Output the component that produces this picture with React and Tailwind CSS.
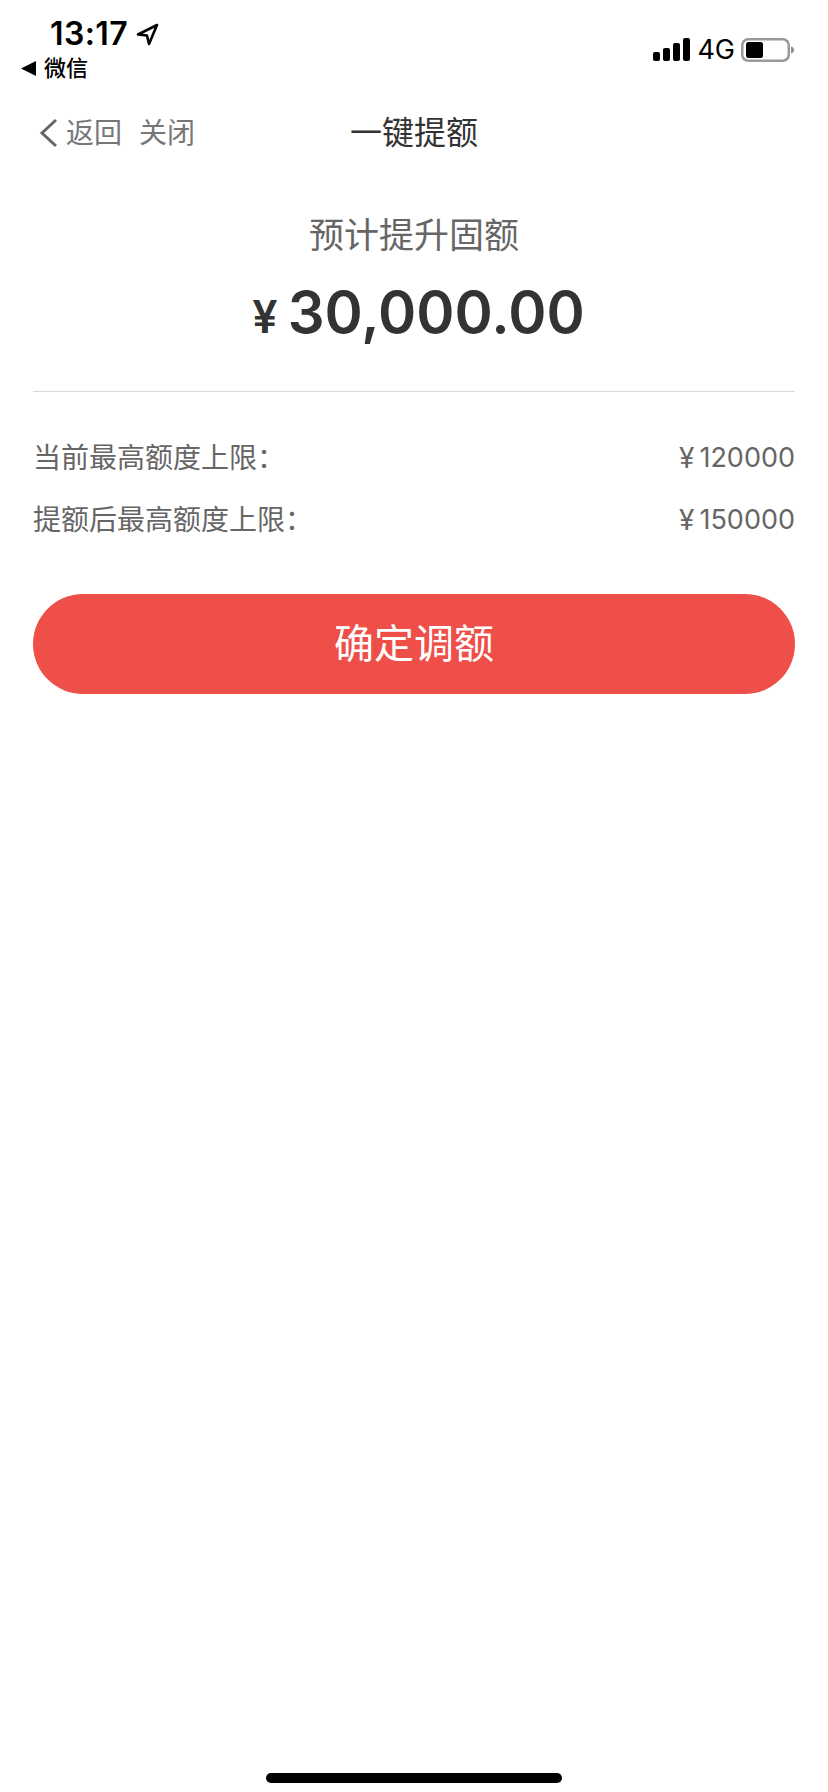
import React from 'react';

const font = "font-['Inter','Noto_Sans_CJK_SC',sans-serif]";

function StatusBar() {
    return (
        <div className="flex justify-between h-[101px]">
            <div className="pt-[17px]">
                <div className="flex items-center pl-[50px] h-[34px]">
                    <span className="text-[32px] leading-[34px] font-semibold text-black tracking-[0.4px]">13:17</span>
                    <svg className="ml-[8px]" width="23" height="23" viewBox="0 0 23 23">
                        <path d="M21 2 2 11.500l9 1 2 8.500z" fill="none" stroke="#000" strokeWidth="2.6" strokeLinejoin="round" />
                    </svg>
                </div>
                <div className="flex items-center pl-[21px] h-[24px] mt-[5px]">
                    <svg width="15" height="15" viewBox="0 0 15 15">
                        <path d="M15 0v15L0 7.500z" fill="#000" />
                    </svg>
                    <span className="ml-[8px] text-[22px] leading-[24px] font-medium text-black">微信</span>
                </div>
            </div>
            <div className="flex items-start pt-[38px] pr-[34px]">
                <svg width="37" height="23" viewBox="0 0 37 23">
                    <rect x="0" y="14" width="7" height="9" rx="2" fill="#000" />
                    <rect x="10" y="10" width="7" height="13" rx="2" fill="#000" />
                    <rect x="20" y="5" width="7" height="18" rx="2" fill="#000" />
                    <rect x="30" y="0" width="7" height="23" rx="2" fill="#000" />
                </svg>
                <span className="ml-[7px] text-[27px] leading-[23px] text-black">4G</span>
                <svg className="ml-[6px]" width="53" height="24" viewBox="0 0 53 24">
                    <rect x="1.250" y="1.250" width="46.500" height="21.500" rx="6" fill="none" stroke="#999" strokeWidth="2.500" />
                    <rect x="5" y="4" width="17" height="16" rx="2.500" fill="#000" />
                    <path d="M50 8.500c2 .6 3 1.800 3 3.500s-1 2.900-3 3.500z" fill="#8e8e8e" />
                </svg>
            </div>
        </div>
    );
}

function NavBar() {
    return (
        <div className="relative flex items-center h-[64px] pl-[39px]">
            <svg width="19" height="30" viewBox="0 0 19 30">
                <path d="M17 2 3 15l14 13" fill="none" stroke="#666" strokeWidth="3" />
            </svg>
            <span className="ml-[8px] text-[28px] leading-[36px] text-[#777]">返回</span>
            <span className="ml-[17px] text-[28px] leading-[36px] text-[#777]">关闭</span>
            <div className="absolute inset-0 flex items-center justify-center pointer-events-none">
                <span className="text-[32px] leading-[40px] text-[#333]">一键提额</span>
            </div>
        </div>
    );
}

function InfoRow({ label, value }) {
    return (
        <div className="flex justify-between items-center h-[62px] text-[28px] text-[#666]">
            <span>{label}</span>
            <span className="flex items-center">
                <span className="mr-[5px]">¥</span>
                <span className="text-[27px]">{value}</span>
            </span>
        </div>
    );
}

export default function App() {
    return (
        <div className={`${font} bg-white min-h-[1792px] relative`}>
            <StatusBar />
            <NavBar />
            <div className="flex flex-col items-center pt-[47px]">
                <div className="text-[35px] leading-[46px] text-[#666]">预计提升固额</div>
                <div className="flex items-baseline mt-[16px] pl-[9px] text-[#333] font-semibold">
                    <span className="text-[45px] leading-[76px] mr-[10px]">¥</span>
                    <span className="text-[58px] leading-[76px]">30,000.00</span>
                </div>
            </div>
            <div className="mx-[33px] mt-[36px] border-t border-[#d9d9d9]" />
            <div className="mx-[33px] mt-[35px]">
                <InfoRow label="当前最高额度上限：" value="120000" />
                <InfoRow label="提额后最高额度上限：" value="150000" />
            </div>
            <div className="mx-[33px] mt-[43px]">
                <button className="w-full h-[100px] rounded-full bg-[#ee4f49] text-white text-[40px]">确定调额</button>
            </div>
            <div className="absolute left-[266px] bottom-[9px] w-[296px] h-[10px] rounded-full bg-black" />
        </div>
    );
}
